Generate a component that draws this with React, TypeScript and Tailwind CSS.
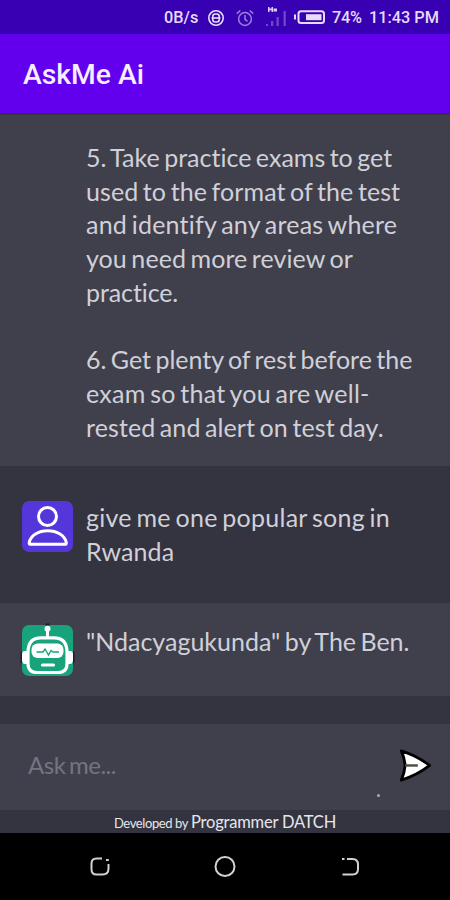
import type { ReactNode } from "react";

type Line = { text: string; spacing: string };

const firstAnswer: Line[] = [
  { text: "5. Take practice exams to get", spacing: "tracking-[0.02px]" },
  { text: "used to the format of the test", spacing: "tracking-[0.1px]" },
  { text: "and identify any areas where", spacing: "tracking-[0.23px]" },
  { text: "you need more review or", spacing: "tracking-[0.08px]" },
  { text: "practice.", spacing: "tracking-[-0.1px]" },
  { text: "", spacing: "" },
  { text: "6. Get plenty of rest before the", spacing: "tracking-[0px]" },
  { text: "exam so that you are well-", spacing: "tracking-[0.25px]" },
  { text: "rested and alert on test day.", spacing: "tracking-[0.1px]" },
];

const question: Line[] = [
  { text: "give me one popular song in", spacing: "tracking-[0.27px]" },
  { text: "Rwanda", spacing: "tracking-[0.1px]" },
];

const secondAnswer: Line[] = [
  { text: '"Ndacyagukunda" by The Ben.', spacing: "tracking-[0px]" },
];

function StatusBar() {
  return (
    <div className="flex h-[34px] shrink-0 items-center bg-[#3700b3] pl-[164px] text-[16.3px] font-medium text-[#e6dcf8]">
      <span className="mt-[2px] w-[43px] whitespace-nowrap">0B/s</span>
      <svg className="mt-px h-[18px] w-[18px]" viewBox="0 0 18 18" fill="none" stroke="#e6dcf8" strokeWidth="1.6">
        <circle cx="9" cy="9" r="7.2" />
        <rect x="5.8" y="5" width="6.4" height="8" rx="2.4" />
        <path d="M4.500 9h9" />
      </svg>
      <svg className="mt-px ml-[11px] h-[18px] w-[18px]" viewBox="0 0 18 18" fill="none" stroke="#9b82da" strokeWidth="1.5">
        <circle cx="9" cy="10" r="6.4" />
        <path d="M9 6v4.300l2.500 2M.8 4.600 4.300 1.500M17.200 4.600l-3.500-3.100" />
      </svg>
      <svg className="ml-[11px] h-[22px] w-[22px]" viewBox="0 0 22 22">
        <path d="M1 18h2v2H1zM6 15h2.300v5H6zM11.500 11h2.300v9h-2.300zM18.500 5h2.300v15h-2.300z" fill="#6d49c9" />
        <path d="M3 1h1.500v1.500h2V1H8v5H6.500V4.300h-2V6H3zM8.500 2.500h3.500V5.500H8.500z" fill="#dacdf4" />
      </svg>
      <svg className="ml-[6px] h-[16px] w-[33px]" viewBox="0 0 33 16">
        <path d="M1 5.500h2v5H1z" fill="#e6dcf8" />
        <rect x="5.500" y="2.200" width="25.500" height="11.800" rx="2.500" fill="none" stroke="#e6dcf8" strokeWidth="2" />
        <path d="M13 5.200h15.500v6H13z" fill="#e6dcf8" />
      </svg>
      <span className="mt-[2px] ml-[6px] w-[37px] whitespace-nowrap tracking-[-0.3px]">74%</span>
      <span className="mt-[2px] whitespace-nowrap">11:43 PM</span>
    </div>
  );
}

function UserAvatar() {
  return (
    <svg className="h-[51px] w-[51px]" viewBox="0 0 51 51">
      <rect width="51" height="51" rx="7" fill="#5436da" />
      <g fill="none" stroke="#fff" strokeWidth="3">
        <circle cx="25.500" cy="15.500" r="9" />
        <path d="M8.500 43.300h34.500q1.500 0 1.300-1.500C43 34.500 35 29.800 25.700 29.800S8.500 34.500 7.200 41.800q-.2 1.500 1.300 1.500z" strokeLinejoin="round" />
      </g>
    </svg>
  );
}

function BotAvatar() {
  return (
    <svg className="h-[51px] w-[51px] overflow-visible" viewBox="0 0 51 51">
      <rect width="51" height="51" rx="7" fill="#19a37c" />
      <path d="M-.5 27v11M51.500 27v11" stroke="#1d1b30" strokeWidth="2" />
      <path d="M23.500-.5h4" stroke="#0c2820" strokeWidth="2" />
      <path d="M25.500 4v9" stroke="#fff" strokeWidth="3" />
      <circle cx="25.500" cy="3.800" r="3" fill="#fff" />
      <path d="M6 27.500C6 17 11 12.800 19 12.800h13C40 12.800 45 17 45 27.500v11c0 6-3 9-9 9H15c-6 0-9-3-9-9z" fill="none" stroke="#fff" strokeWidth="3.200" />
      <path d="M6 26H3Q0 26 0 29v6q0 4 3 4h3zM45 26h3q3 0 3 3v6q0 4-3 4h-3z" fill="#fff" />
      <rect x="9.500" y="18.500" width="32" height="14.500" rx="6" fill="#fff" />
      <path d="M14.500 27h6.500l2-3 3.500 6 2.500-4.500 2 1.500h6" fill="none" stroke="#19a37c" strokeWidth="1.400" />
      <path d="M20.500 40h11" stroke="#fff" strokeWidth="3.200" strokeLinecap="round" />
    </svg>
  );
}

function Message({ lines, avatar, className }: { lines: Line[]; avatar?: ReactNode; className: string }) {
  return (
    <div className={`flex shrink-0 items-start pl-[22px] ${className}`}>
      <div className="w-[64px] shrink-0">{avatar}</div>
      <p className="text-[25px] leading-[33.7px] whitespace-nowrap text-[#d0d0d8] [font-variant-ligatures:none] [word-spacing:-2px]">
        {lines.map((line, i) => (
          <span key={i} className={`block h-[33.7px] w-fit ${line.spacing}`}>
            {line.text}
          </span>
        ))}
      </p>
    </div>
  );
}

function InputBar() {
  return (
    <div className="relative flex h-[86px] shrink-0 items-center justify-between bg-[#40404d] pr-[17px] pl-[28px]">
      <span className="mb-[4px] text-[24px] tracking-[-0.5px] text-[#74747e] [word-spacing:-2px]">Ask me...</span>
      <svg className="mb-[5px] h-[34px] w-[35px]" viewBox="0 0 37 36">
        <path d="M3.500 3Q20 8 33.500 18.500 20 29 3.500 34 7 26 7.500 18.500 7 11 3.500 3z" fill="#fff" stroke="#000" strokeWidth="3" strokeLinejoin="round" />
        <path d="M7.500 18.500H21" stroke="#4e4e46" strokeWidth="2.600" />
      </svg>
      <span className="absolute top-[70px] left-[377px] h-[3px] w-[3px] rounded-full bg-[#aaaab4]" />
    </div>
  );
}

function NavBar() {
  return (
    <div className="flex h-[67px] shrink-0 items-center justify-between bg-black px-[88px]">
      <svg className="h-[24px] w-[24px]" viewBox="0 0 24 24" fill="none" stroke="#d2d2d2" strokeWidth="2">
        <path d="M14 3.500H8.500Q3.500 3.500 3.500 8.500v6q0 5 5 5h6q6 0 6-6V9M18 5h2.800" />
      </svg>
      <svg className="h-[24px] w-[24px]" viewBox="0 0 24 24" fill="none" stroke="#d2d2d2" strokeWidth="2">
        <circle cx="12" cy="11.500" r="9.500" />
      </svg>
      <svg className="h-[24px] w-[24px]" viewBox="0 0 24 24" fill="none" stroke="#d2d2d2" strokeWidth="2">
        <path d="M4 4h2.500M9 4h5.500q5.500 0 5.500 5.500v4.500q0 5.500-5.500 5.500H4.500" />
      </svg>
    </div>
  );
}

export default function App() {
  return (
    <div className="flex h-[900px] w-[450px] flex-col overflow-hidden bg-[#343340] font-['Roboto',sans-serif]">
      <StatusBar />
      <header className="flex h-[79px] shrink-0 items-center bg-[#6200ee] pt-[3px] pl-[23px]">
        <h1 className="text-[28.3px] font-medium text-[#f4eeff]">AskMe Ai</h1>
      </header>

      <main className="flex flex-col font-['Lato',sans-serif]">
        <Message lines={firstAnswer} className="h-[353px] border-t-2 border-[#38313e] bg-[#40404d] pt-[26px]" />
        <Message lines={question} avatar={<UserAvatar />} className="h-[137px] pt-[35px]" />
        <Message lines={secondAnswer} avatar={<BotAvatar />} className="h-[93px] bg-[#40404d] pt-[22px]" />
        <div className="h-[28px] shrink-0" />
        <InputBar />
        <footer className="flex h-[23px] shrink-0 items-baseline justify-center whitespace-nowrap text-[#e6e6ec]">
          <span className="mr-[3px] text-[13px] tracking-[-0.4px]">Developed by</span>
          <span className="text-[16.5px] tracking-[-0.2px]">Programmer DATCH</span>
        </footer>
      </main>

      <NavBar />
    </div>
  );
}
